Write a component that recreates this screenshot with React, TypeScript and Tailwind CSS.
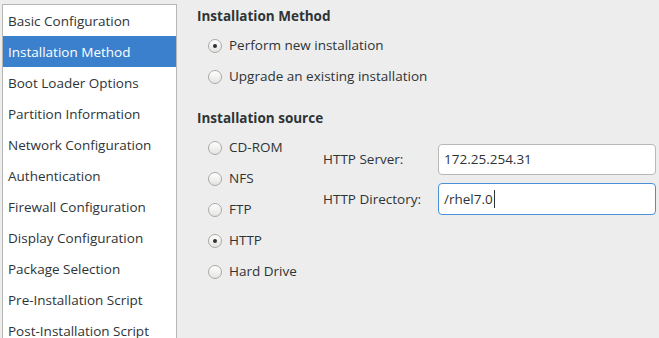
import React from "react";

const sections = [
  "Basic Configuration",
  "Installation Method",
  "Boot Loader Options",
  "Partition Information",
  "Network Configuration",
  "Authentication",
  "Firewall Configuration",
  "Display Configuration",
  "Package Selection",
  "Pre-Installation Script",
  "Post-Installation Script",
];

const Radio = ({ label, checked }: { label: string; checked?: boolean }) => (
  <div className="h-[31px] flex items-center pl-[11px]">
    <span className="w-[14px] h-[14px] rounded-full border border-[#a9a9a6] bg-gradient-to-b from-white to-[#e4e4e2] flex items-center justify-center shrink-0">
      {checked && <span className="w-[4px] h-[4px] rounded-full bg-[#2e3436]" />}
    </span>
    <span className="ml-[7px]">{label}</span>
  </div>
);

const Sidebar = () => (
  <div className="w-[175px] ml-[2px] mt-[4px] h-[340px] bg-white border border-[#b6b6b3] border-b-0 shrink-0">
    {sections.map((s) => (
      <div
        key={s}
        className={`h-[31px] flex items-center pl-[5px] pt-px ${s === "Installation Method" ? "bg-[#3b80cc] text-white" : ""}`}
      >
        {s}
      </div>
    ))}
  </div>
);

export default function App() {
  return (
    <div
      className="w-[659px] h-[338px] overflow-hidden bg-[#ededed] text-[#2e3436] text-[13.5px] flex"
      style={{ fontFamily: '"Open Sans", sans-serif' }}
    >
      <Sidebar />
      <div className="ml-[20px] pt-[6px] flex-1">
        <div className="h-[20px] flex items-center font-bold">Installation Method</div>
        <div className="mt-[4px]">
          <Radio label="Perform new installation" checked />
          <Radio label="Upgrade an existing installation" />
        </div>
        <div className="h-[20px] mt-[16px] flex items-center font-bold">Installation source</div>
        <div className="flex items-start mt-[4px]">
          <div className="w-[126px]">
            <Radio label="CD-ROM" />
            <Radio label="NFS" />
            <Radio label="FTP" />
            <Radio label="HTTP" checked />
            <Radio label="Hard Drive" />
          </div>
          <div className="mt-[12px] grid grid-cols-[115px_218px] gap-y-[8px] items-center content-start">
            <span>HTTP Server:</span>
            <div className="h-[31px] rounded-[4px] border border-[#b8b8b5] bg-white flex items-center pl-[5px]">
              172.25.254.31
            </div>
            <span>HTTP Directory:</span>
            <div className="h-[32px] rounded-[4px] border border-[#4a90d9] bg-white flex items-center pl-[5px]">
              /rhel7.0
              <span className="w-px h-[18px] bg-[#2e3436] ml-[1px]" />
            </div>
          </div>
        </div>
      </div>
    </div>
  );
}
